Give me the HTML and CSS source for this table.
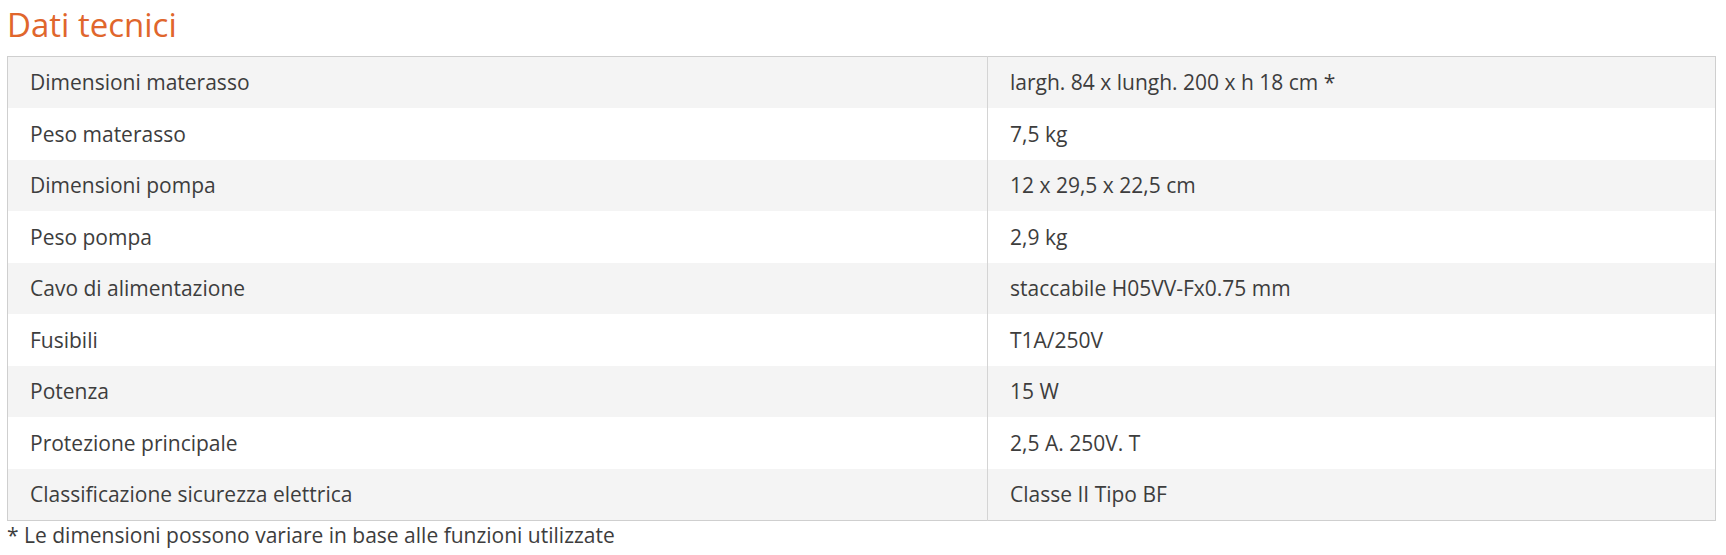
FILE: index.html
```html
<!DOCTYPE html>
<html lang="it">
<head>
<meta charset="utf-8">
<title>Dati tecnici</title>
<link rel="stylesheet" href="styles.css">
</head>
<body>
<div class="page">
  <h2 class="title">Dati tecnici</h2>
  <table class="specs">
    <tr><td class="label">Dimensioni materasso</td><td>largh. 84 x lungh. 200 x h 18 cm *</td></tr>
    <tr><td class="label">Peso materasso</td><td>7,5 kg</td></tr>
    <tr><td class="label">Dimensioni pompa</td><td>12 x 29,5 x 22,5 cm</td></tr>
    <tr><td class="label">Peso pompa</td><td>2,9 kg</td></tr>
    <tr><td class="label">Cavo di alimentazione</td><td>staccabile H05VV-Fx0.75 mm</td></tr>
    <tr><td class="label">Fusibili</td><td>T1A/250V</td></tr>
    <tr><td class="label">Potenza</td><td>15 W</td></tr>
    <tr><td class="label">Protezione principale</td><td>2,5 A. 250V. T</td></tr>
    <tr><td class="label">Classificazione sicurezza elettrica</td><td>Classe II Tipo BF</td></tr>
  </table>
  <p class="note">* Le dimensioni possono variare in base alle funzioni utilizzate</p>
</div>
</body>
</html>
```

FILE: styles.css
```css
html, body {
  margin: 0;
  padding: 0;
  background: #fff;
}
.page {
  padding: 6.6px 10px 0 7px;
  font-family: "Open Sans", "Liberation Sans", sans-serif;
  color: #3d3d3d;
}
.title {
  margin: 0 0 13.5px 0;
  font-size: 33px;
  line-height: 36.3px;
  font-weight: 400;
  color: #e0662c;
}
.specs {
  width: 100%;
  border-collapse: collapse;
  border: 1px solid #cfcfcf;
  font-size: 21px;
}
.specs tr:nth-child(odd) {
  background: #f4f4f4;
}
.specs td {
  height: 51.5px;
  padding: 0 22px;
  line-height: 25px;
  vertical-align: middle;
  box-sizing: border-box;
}
.specs td.label {
  width: 980px;
  border-right: 1px solid #d4d4d4;
}
.note {
  margin: 0;
  font-size: 21px;
  line-height: 28px;
}
```
